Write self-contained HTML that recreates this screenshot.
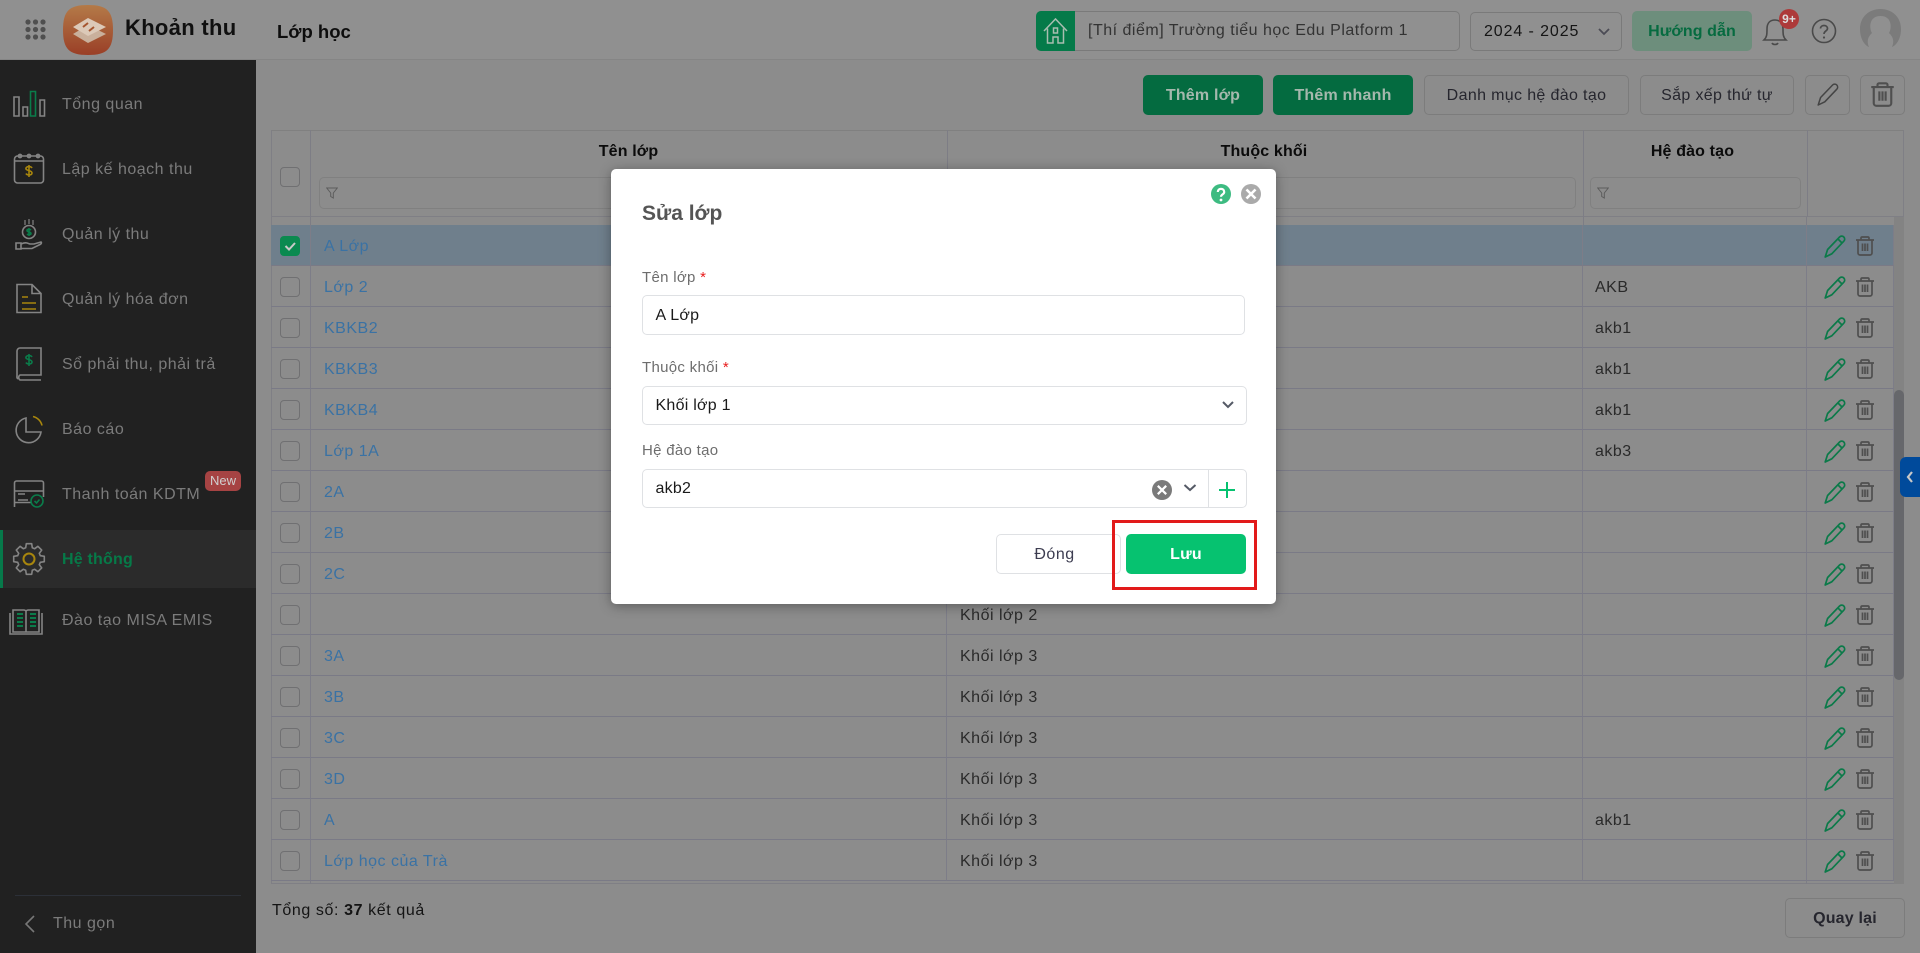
<!DOCTYPE html>
<html lang="vi"><head><meta charset="utf-8"><title>Lớp học</title>
<style>
*{box-sizing:border-box}
html,body{margin:0;padding:0;width:1920px;height:953px;overflow:hidden;background:#8c8c8c;font-family:"Liberation Sans",sans-serif;color:#2a2a2a}
.a{position:absolute}
#hdr{left:0;top:0;width:1920px;height:60px;background:#909090;border-bottom:1px solid #858585}
#side{left:0;top:60px;width:256px;height:893px;background:#212121}
.mi{position:absolute;left:62px;font-size:16px;letter-spacing:.5px;color:#7b7b7b;line-height:20px;white-space:nowrap}
.btn{position:absolute;top:75px;height:40px;border-radius:5px;border:1px solid #7c7c7c;font-size:16px;letter-spacing:.35px;line-height:40px;text-align:center;color:#26262e;white-space:nowrap}
.g{background:#046b40;border-color:#046b40;color:#a5b8ad;font-weight:bold;letter-spacing:.2px}
#tb{left:271px;top:130px;width:1633px;height:754px;border:1px solid #7f7f85;border-top-color:#808080}
.vl{position:absolute;width:1px;background:#7d7d85}
table{position:absolute;left:271px;top:225px;border-collapse:separate;border-spacing:0;table-layout:fixed;width:1623px;font-size:16px;letter-spacing:.5px}
td{height:41px;padding:4px 0 0 13px;border-bottom:1px solid #7a7a86;border-right:1px solid #7d7d88;white-space:nowrap;overflow:hidden;color:#2a2a2a;position:relative}
td:nth-child(4){padding-left:12px}
td.l{color:#3a72a4}
td:first-child{padding:2px 0 0}
tr.s td{background:#6f7f8c}
.cb{display:block;width:20px;height:20px;border:1.5px solid #707072;border-radius:4px;margin-left:9px}
.th{position:absolute;top:142px;font-size:16px;font-weight:bold;color:#0b0b0b;text-align:center;line-height:20px;letter-spacing:.15px}
.fl{position:absolute;top:177px;height:32px;border:1px solid #808080;border-radius:5px}
#dlg{left:611px;top:169px;width:665px;height:435px;background:#fff;border-radius:5px;box-shadow:0 2px 12px rgba(0,0,0,.35)}
.lb{position:absolute;font-size:15px;letter-spacing:.3px;color:#6d6d6d;left:31px;line-height:18px;white-space:nowrap}
.lb b{color:#e81c1c;font-weight:normal}
.ip{position:absolute;left:30.5px;height:40px;border:1px solid #dfe1e4;border-radius:5px;font-size:16px;letter-spacing:.25px;line-height:40px;padding-left:13px;color:#1a1a1a;white-space:nowrap}
</style></head><body>
<svg width="0" height="0" style="position:absolute"><defs>
<symbol id="pen" viewBox="0 1 22 24"><path d="M1.2 23 L3.6 15.500 L15.600 3 a2.900 2.900 0 0 1 4.200 4.200 L7.800 19.800 Z M14 5 L18 9" fill="none" stroke="#0b7a49" stroke-width="1.700" stroke-linejoin="round"/></symbol>
<symbol id="tr" viewBox="0 0 20 20"><path d="M1 4 H19 M6 4 V2.200 a1.200 1.200 0 0 1 1.200-1.200 H12.800 a1.200 1.200 0 0 1 1.200 1.200 V4 M3 4 V17 a2 2 0 0 0 2 2 H15 a2 2 0 0 0 2-2 V4 M7.500 7.500 V15 M10 7.500 V15 M12.500 7.500 V15" fill="none" stroke="#4f4f4f" stroke-width="1.700"/></symbol>
<symbol id="fi" viewBox="0 0 12 12"><path d="M.7 1 H11.300 L7.300 6 V11 L4.700 9.500 V6 Z" fill="none" stroke="#5c5c5c" stroke-width="1"/></symbol>
</defs></svg>

<div class="a" id="hdr"></div>
<svg class="a" style="left:25px;top:19px" width="21" height="21"><g fill="#4f4f4f"><circle cx="3" cy="3" r="2.600"/><circle cx="10.500" cy="3" r="2.600"/><circle cx="18" cy="3" r="2.600"/><circle cx="3" cy="10.500" r="2.600"/><circle cx="10.500" cy="10.500" r="2.600"/><circle cx="18" cy="10.500" r="2.600"/><circle cx="3" cy="18" r="2.600"/><circle cx="10.500" cy="18" r="2.600"/><circle cx="18" cy="18" r="2.600"/></g></svg>
<svg class="a" style="left:63px;top:5px" width="50" height="50" viewBox="0 0 50 50"><defs><linearGradient id="lg" x1="0" y1="0" x2="0" y2="1"><stop offset="0" stop-color="#b47a48"/><stop offset="1" stop-color="#9a3f27"/></linearGradient></defs><path d="M25 0 C44 0 50 6 50 25 C50 44 44 50 25 50 C6 50 0 44 0 25 C0 6 6 0 25 0Z" fill="url(#lg)"/><path d="M25 20 L43 29 L25 38 L10 29Z" fill="#c9b09c"/><path d="M25 13 L43 22 L25 31 L10 22Z" fill="#dcc9b8"/><path d="M20 22 L25 18 M26 26 L31 22" stroke="#a5552f" stroke-width="2"/></svg>
<div class="a" style="left:125px;top:15px;font-size:22px;font-weight:bold;color:#101010;line-height:26px;letter-spacing:.3px;white-space:nowrap">Khoản thu</div>
<div class="a" style="left:277px;top:21px;font-size:18.500px;font-weight:bold;color:#0d0d0d;line-height:22px;white-space:nowrap">Lớp học</div>

<div class="a" style="left:1036px;top:11px;width:424px;height:40px;border:1px solid #7a7a7a;border-radius:5px;font-size:16px;letter-spacing:.5px;line-height:38px;padding-left:51px;color:#333;white-space:nowrap">[Thí điểm] Trường tiểu học Edu Platform 1</div>
<div class="a" style="left:1036px;top:11px;width:39px;height:40px;background:#057a49;border-radius:5px 0 0 5px"></div>
<svg class="a" style="left:1043px;top:17px" width="26" height="28" viewBox="0 0 26 28"><path d="M1 14 L12.500 2 L24 14 M4.500 11.500 V26 H10 V20 H15 V26 H20.500 V11.500 M10.500 11 H14.500 V16 H10.500Z" fill="none" stroke="#a8bdb0" stroke-width="1.500"/></svg>
<div class="a" style="left:1470px;top:12px;width:152px;height:39px;border:1px solid #7a7a7a;border-radius:5px;font-size:16px;letter-spacing:.9px;line-height:37px;padding-left:13px;color:#151515">2024 - 2025</div>
<svg class="a" style="left:1597px;top:27px" width="14" height="10"><path d="M2 2 L7 7 L12 2" fill="none" stroke="#4b4b55" stroke-width="1.800"/></svg>
<div class="a" style="left:1632px;top:11px;width:120px;height:40px;background:#6d8e7c;border-radius:5px;font-size:16px;font-weight:bold;line-height:41px;text-align:center;color:#066b40;letter-spacing:.1px">Hướng dẫn</div>
<svg class="a" style="left:1762px;top:14px" width="26" height="34" viewBox="0 0 26 34"><path d="M2 26 C5 23 5 20 5 15 C5 9 8 6 13 6 C18 6 21 9 21 15 C21 20 21 23 24 26 Z M10 29 C11 31 15 31 16 29" fill="none" stroke="#4a4a4a" stroke-width="1.600"/></svg>
<div class="a" style="left:1779px;top:9px;width:20px;height:20px;border-radius:50%;background:#ad3a3a;color:#ddd;font-size:12px;font-weight:bold;line-height:20px;text-align:center">9+</div>
<svg class="a" style="left:1811px;top:18px" width="26" height="26" viewBox="0 0 26 26"><circle cx="13" cy="13" r="11.500" fill="none" stroke="#4a4a4a" stroke-width="1.600"/><path d="M9.500 10.500 C9.500 6.500 16.500 6.500 16.500 10.500 C16.500 13 13 13 13 16" fill="none" stroke="#4a4a4a" stroke-width="1.700"/><circle cx="13" cy="19.500" r="1.100" fill="#4a4a4a"/></svg>
<svg class="a" style="left:1859px;top:8px" width="43" height="40" viewBox="0 0 43 40"><path d="M21.500 1 C33 1 42 9 42 21 C42 30 38 37 33 39 C36 32 33 28 30 25 C33 20 33 8 21.500 8 C10 8 10 20 13 25 C10 28 7 32 10 39 C5 37 1 30 1 21 C1 9 10 1 21.500 1Z" fill="#7b7b7b"/></svg>

<div class="a" id="side"></div>
<div class="mi" style="top:95px">Tổng quan</div>
<div class="mi" style="top:160px">Lập kế hoạch thu</div>
<div class="mi" style="top:225px">Quản lý thu</div>
<div class="mi" style="top:290px">Quản lý hóa đơn</div>
<div class="mi" style="top:355px">Sổ phải thu, phải trả</div>
<div class="mi" style="top:420px">Báo cáo</div>
<div class="mi" style="top:485px">Thanh toán KDTM</div>
<div class="a" style="left:0;top:530px;width:256px;height:58px;background:#2b2b2b;border-left:3px solid #06794a"></div>
<div class="mi" style="top:550px;color:#067a48;font-weight:bold;letter-spacing:.2px">Hệ thống</div>
<div class="mi" style="top:611px">Đào tạo MISA EMIS</div>
<div class="a" style="left:205px;top:471px;width:36px;height:20px;border-radius:5px;background:#a64343;color:#d0d0d0;font-size:13px;line-height:20px;text-align:center">New</div>
<svg class="a" style="left:0;top:80px" width="60" height="570" viewBox="0 80 60 570" fill="none" stroke="#848484" stroke-width="1.600">
<path d="M14 97 h5 v19 h-5z M23 107 h4.500 v9 h-4.500z M40 100 h4.500 v16 h-4.500z"/><path d="M30.500 91.500 h5 v24.500 h-5z" stroke="#0a7c4a"/>
<path d="M14.500 159 a3 3 0 0 1 3-3 h23 a3 3 0 0 1 3 3 v21 a3 3 0 0 1-3 3 h-23 a3 3 0 0 1-3-3z M14.500 161 h29"/><circle cx="20" cy="156" r="1.600"/><circle cx="29" cy="156" r="1.600"/><circle cx="38" cy="156" r="1.600"/>
<path d="M32 168 c-1-2-5-2-6 0 c-1 3 6 2 6 5 c0 2.500-5 2.500-6 .5 M29 165 v12" stroke="#a8860d"/>
<circle cx="29" cy="232" r="6.500"/><path d="M25 225 v-5 M29 224 v-5 M33 225 v-5" stroke-width="1.200"/><path d="M31 230 c-1-1-4-1-4 .5 c0 2 4 1 4 3 c0 1.500-3 1.500-4 .5 M29 228 v8" stroke="#0a7c4a"/>
<path d="M16 243 h5 v6 h-5z M21 244 c5-2 6-1 9 0 h4 l7-2 c1 1 0 2-1 2.500 l-8 4 h-11"/>
<path d="M17 284.500 h15 l9 9 v19 h-24z M32 284.500 v9 h9"/><path d="M22 297 h6 M22 303 h14 M22 309 h14" stroke="#a8860d"/>
<path d="M18 379 a3 3 0 0 1-1-3 v-25 a3 3 0 0 1 3-3 h21 v27 h-21 a3 3 0 0 0 0 5 h21"/><path d="M32 357 c-1-2-5-2-6 0 c-1 3 6 2 6 5 c0 2.500-5 2.500-6 .5 M29 354 v12" stroke="#0a7c4a"/>
<path d="M26 418 a12.500 12.500 0 1 0 15 14 h-15z"/><path d="M33 416.500 a12 12 0 0 1 9 9" stroke="#a8860d"/>
<path d="M14.500 507 v-24 a2 2 0 0 1 2-2 h25 a2 2 0 0 1 2 2 v14 M14.500 491 h29 M18 494 h7 M18 500 h10 M14.500 502.500 h16"/><circle cx="37" cy="501" r="6" stroke="#0a7c4a"/><path d="M34.500 501 l2 2 l3-3.500" stroke="#0a7c4a"/>
<path transform="translate(29 559)" stroke-linejoin="round" d="M2.700-15.300 L3.300-11.300 5.700-10.300 8.900-12.700 12.700-8.900 10.300-5.700 11.300-3.300 15.300-2.700 15.300 2.700 11.300 3.300 10.300 5.700 12.700 8.900 8.900 12.700 5.700 10.300 3.300 11.300 2.700 15.300 -2.700 15.300 -3.300 11.300 -5.700 10.300 -8.900 12.700 -12.700 8.900 -10.300 5.700 -11.300 3.300 -15.300 2.700 -15.300-2.700 -11.300-3.300 -10.300-5.700 -12.700-8.900 -8.900-12.700 -5.700-10.300 -3.300-11.300 -2.700-15.300Z"/><circle cx="29" cy="559" r="5.500" stroke="#a8860d" stroke-width="2"/>
<path d="M13 610 h11 a3 3 0 0 1 2 1 a3 3 0 0 1 2-1 h11 v22 h-26z M10 613 v21 h32 v-21 M26 611 v21"/><path d="M17 614 h6 M17 618 h6 M17 622 h6 M17 626 h6 M30 614 h6 M30 618 h6 M30 622 h6 M30 626 h6" stroke="#0a7c4a" stroke-width="2"/>
</svg>
<div class="a" style="left:15px;top:895px;width:226px;height:1px;background:#2c3038"></div>
<svg class="a" style="left:24px;top:914px" width="12" height="20"><path d="M10 2 L2 10 L10 18" fill="none" stroke="#777" stroke-width="1.600"/></svg>
<div class="mi" style="left:53px;top:914px">Thu gọn</div>

<div class="btn g" style="left:1143px;width:120px">Thêm lớp</div>
<div class="btn g" style="left:1273px;width:140px">Thêm nhanh</div>
<div class="btn" style="left:1424px;width:205px">Danh mục hệ đào tạo</div>
<div class="btn" style="left:1640px;width:154px">Sắp xếp thứ tự</div>
<div class="btn" style="left:1805px;width:45px"></div>
<div class="btn" style="left:1860px;width:45px"></div>
<svg class="a" style="left:1817px;top:83px" width="22" height="24" viewBox="0 1 22 24"><path d="M1.200 23 L3.600 15.500 L15.600 3 a2.900 2.900 0 0 1 4.200 4.200 L7.800 19.800 Z" fill="none" stroke="#444" stroke-width="1.500" stroke-linejoin="round"/></svg>
<svg class="a" style="left:1870px;top:82px" width="25" height="25"><use href="#tr"/></svg>

<div class="a" id="tb"></div>
<div class="a" style="left:271px;top:216px;width:1633px;height:1px;background:#7f7f85"></div>
<div class="vl" style="left:310px;top:130px;height:95px"></div>
<div class="vl" style="left:947px;top:130px;height:95px"></div>
<div class="vl" style="left:1583px;top:130px;height:95px"></div>
<div class="vl" style="left:1807px;top:130px;height:87px"></div>
<div class="vl" style="left:1806px;top:217px;height:8px"></div>
<div class="a" style="left:1894px;top:217px;width:10px;height:667px;background:#838383"></div>
<div class="a" style="left:1894px;top:390px;width:10px;height:290px;border-radius:5px;background:#66676b"></div>
<div class="a" style="left:271px;top:881px;width:1623px;height:3px;border-bottom:1px solid #7f7f85"></div>
<div class="vl" style="left:310px;top:881px;height:3px"></div>
<div class="vl" style="left:1806px;top:881px;height:3px"></div>

<span class="cb a" style="left:271px;top:167px"></span>
<div class="th" style="left:310px;width:637px">Tên lớp</div>
<div class="th" style="left:947px;width:634px">Thuộc khối</div>
<div class="th" style="left:1583px;width:219px">Hệ đào tạo</div>
<div class="fl" style="left:319px;width:620px"></div>
<div class="fl" style="left:956px;width:620px"></div>
<div class="fl" style="left:1590px;width:211px"></div>
<svg class="a" style="left:326px;top:187px" width="12" height="12"><use href="#fi"/></svg>
<svg class="a" style="left:1597px;top:187px" width="12" height="12"><use href="#fi"/></svg>

<table><colgroup><col style="width:40px"><col style="width:636px"><col style="width:636px"><col style="width:224px"><col style="width:87px"></colgroup>
<tr class="s"><td><span class="cb" style="background:#0a8a50;border-color:#0a8a50;position:relative"><svg style="position:absolute;left:2px;top:2px" width="14" height="14"><path d="M2.500 7 L6 10.500 L12 4" fill="none" stroke="#c9c9c9" stroke-width="2"/></svg></span></td><td class="l">A Lớp</td><td>Khối lớp 1</td><td></td><td></td></tr>
<tr><td><span class="cb"></span></td><td class="l">Lớp 2</td><td>Khối lớp 1</td><td>AKB</td><td></td></tr>
<tr><td><span class="cb"></span></td><td class="l">KBKB2</td><td>Khối lớp 1</td><td>akb1</td><td></td></tr>
<tr><td><span class="cb"></span></td><td class="l">KBKB3</td><td>Khối lớp 1</td><td>akb1</td><td></td></tr>
<tr><td><span class="cb"></span></td><td class="l">KBKB4</td><td>Khối lớp 1</td><td>akb1</td><td></td></tr>
<tr><td><span class="cb"></span></td><td class="l">Lớp 1A</td><td>Khối lớp 1</td><td>akb3</td><td></td></tr>
<tr><td><span class="cb"></span></td><td class="l">2A</td><td>Khối lớp 2</td><td></td><td></td></tr>
<tr><td><span class="cb"></span></td><td class="l">2B</td><td>Khối lớp 2</td><td></td><td></td></tr>
<tr><td><span class="cb"></span></td><td class="l">2C</td><td>Khối lớp 2</td><td></td><td></td></tr>
<tr><td><span class="cb"></span></td><td class="l"></td><td>Khối lớp 2</td><td></td><td></td></tr>
<tr><td><span class="cb"></span></td><td class="l">3A</td><td>Khối lớp 3</td><td></td><td></td></tr>
<tr><td><span class="cb"></span></td><td class="l">3B</td><td>Khối lớp 3</td><td></td><td></td></tr>
<tr><td><span class="cb"></span></td><td class="l">3C</td><td>Khối lớp 3</td><td></td><td></td></tr>
<tr><td><span class="cb"></span></td><td class="l">3D</td><td>Khối lớp 3</td><td></td><td></td></tr>
<tr><td><span class="cb"></span></td><td class="l">A</td><td>Khối lớp 3</td><td>akb1</td><td></td></tr>
<tr><td><span class="cb"></span></td><td class="l">Lớp học của Trà</td><td>Khối lớp 3</td><td></td><td></td></tr>
</table>

<svg class="a" style="left:1820px;top:225px" width="60" height="656" viewBox="0 0 60 656">
<use href="#pen" x="4" y="10" width="22" height="24"/><use href="#tr" x="35" y="11" width="20" height="20"/>
<use href="#pen" x="4" y="51" width="22" height="24"/><use href="#tr" x="35" y="52" width="20" height="20"/>
<use href="#pen" x="4" y="92" width="22" height="24"/><use href="#tr" x="35" y="93" width="20" height="20"/>
<use href="#pen" x="4" y="133" width="22" height="24"/><use href="#tr" x="35" y="134" width="20" height="20"/>
<use href="#pen" x="4" y="174" width="22" height="24"/><use href="#tr" x="35" y="175" width="20" height="20"/>
<use href="#pen" x="4" y="215" width="22" height="24"/><use href="#tr" x="35" y="216" width="20" height="20"/>
<use href="#pen" x="4" y="256" width="22" height="24"/><use href="#tr" x="35" y="257" width="20" height="20"/>
<use href="#pen" x="4" y="297" width="22" height="24"/><use href="#tr" x="35" y="298" width="20" height="20"/>
<use href="#pen" x="4" y="338" width="22" height="24"/><use href="#tr" x="35" y="339" width="20" height="20"/>
<use href="#pen" x="4" y="379" width="22" height="24"/><use href="#tr" x="35" y="380" width="20" height="20"/>
<use href="#pen" x="4" y="420" width="22" height="24"/><use href="#tr" x="35" y="421" width="20" height="20"/>
<use href="#pen" x="4" y="461" width="22" height="24"/><use href="#tr" x="35" y="462" width="20" height="20"/>
<use href="#pen" x="4" y="502" width="22" height="24"/><use href="#tr" x="35" y="503" width="20" height="20"/>
<use href="#pen" x="4" y="543" width="22" height="24"/><use href="#tr" x="35" y="544" width="20" height="20"/>
<use href="#pen" x="4" y="584" width="22" height="24"/><use href="#tr" x="35" y="585" width="20" height="20"/>
<use href="#pen" x="4" y="625" width="22" height="24"/><use href="#tr" x="35" y="626" width="20" height="20"/>
</svg>

<div class="a" style="left:1900px;top:457px;width:20px;height:40px;background:#004a9b;border-radius:6px 0 0 6px"></div>
<svg class="a" style="left:1905px;top:470px" width="10" height="14"><path d="M7 2 L3 7 L7 12" fill="none" stroke="#c8c8c8" stroke-width="2.200"/></svg>

<div class="a" style="left:272px;top:901px;font-size:16px;letter-spacing:.6px;line-height:20px;color:#141414;white-space:nowrap">Tổng số: <b>37</b> kết quả</div>
<div class="btn" style="left:1785px;top:898px;width:120px;font-weight:bold;letter-spacing:.2px">Quay lại</div>

<div class="a" id="dlg">
<div class="a" style="left:31px;top:32px;font-size:21px;font-weight:bold;color:#555;line-height:26px;white-space:nowrap">Sửa lớp</div>
<svg class="a" style="left:600px;top:15px" width="52" height="22"><circle cx="10" cy="10" r="10" fill="#3dbb81"/><path d="M6.800 8 C6.800 3.800 13.200 3.800 13.200 8 C13.200 10.500 10 10.300 10 12.800" fill="none" stroke="#fff" stroke-width="2.200"/><circle cx="10" cy="16" r="1.400" fill="#fff"/><circle cx="40" cy="10" r="10" fill="#aaa"/><path d="M35.500 5.500 L44.500 14.500 M44.500 5.500 L35.500 14.500" stroke="#fff" stroke-width="2.600"/></svg>
<div class="lb" style="top:100px">Tên lớp <b>*</b></div>
<div class="ip" style="top:126px;width:603px">A Lớp</div>
<div class="lb" style="top:190px">Thuộc khối <b>*</b></div>
<div class="ip" style="top:217px;width:605px;height:39px;line-height:38px">Khối lớp 1</div>
<svg class="a" style="left:610px;top:231px" width="14" height="10"><path d="M2 2 L7 7 L12 2" fill="none" stroke="#555a66" stroke-width="2"/></svg>
<div class="lb" style="top:273px">Hệ đào tạo</div>
<div class="ip" style="top:300px;width:605px;height:39px;line-height:37px">akb2</div>
<div class="a" style="left:597px;top:300px;width:1px;height:39px;background:#dfe1e4"></div>
<svg class="a" style="left:540px;top:310px" width="60" height="22"><circle cx="11" cy="11" r="10" fill="#7a7a7a"/><path d="M6.800 6.800 L15.200 15.200 M15.200 6.800 L6.800 15.200" stroke="#fff" stroke-width="2.200"/><path d="M33.500 6 L39 11 L44.500 6" fill="none" stroke="#555a66" stroke-width="2"/></svg>
<svg class="a" style="left:607px;top:312px" width="18" height="18"><path d="M9 1 V17 M1 9 H17" stroke="#06c270" stroke-width="2"/></svg>
<div class="a" style="left:385px;top:365px;width:125px;height:40px;border:1px solid #dfe1e4;border-radius:5px;font-size:16px;letter-spacing:.5px;line-height:40px;text-align:center;color:#3c3c50;padding-right:8px">Đóng</div>
<div class="a" style="left:515px;top:365px;width:120px;height:40px;background:#06c270;border-radius:5px;font-size:16px;font-weight:bold;line-height:41px;text-align:center;color:#fff;letter-spacing:.2px">Lưu</div>
<div class="a" style="left:501px;top:351px;width:145px;height:70px;border:3px solid #e21a1a"></div>
</div>
</body></html>
